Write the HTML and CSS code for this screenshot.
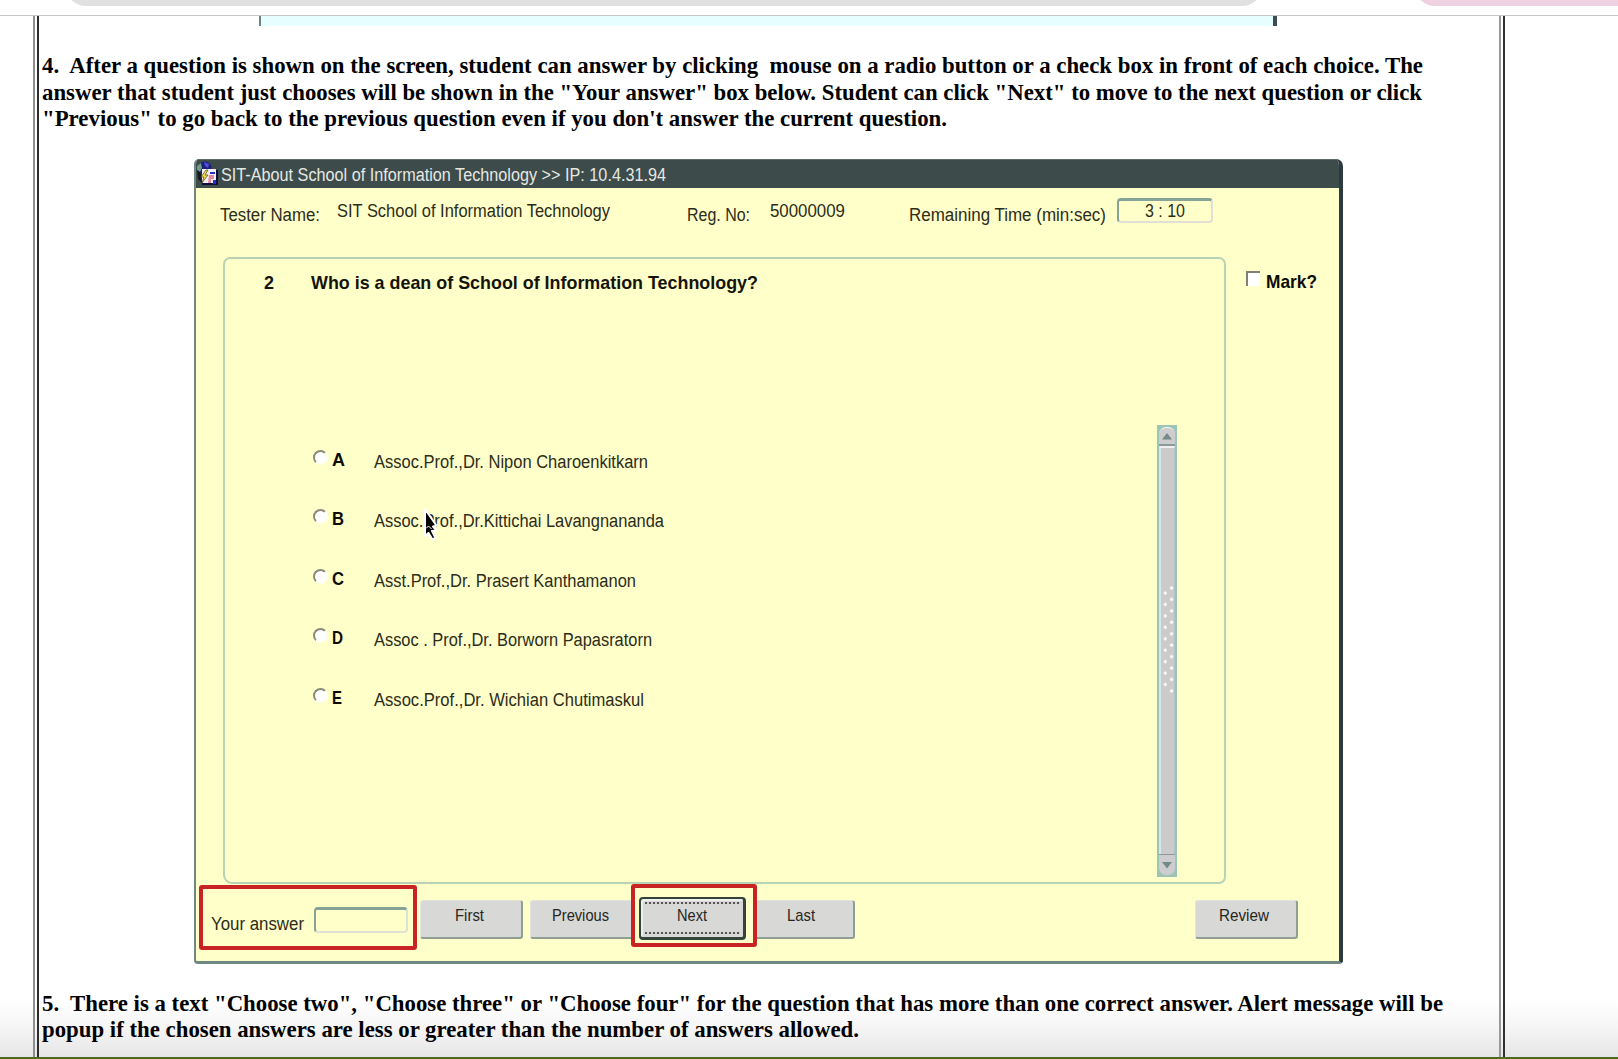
FILE: index.html
```html
<!DOCTYPE html>
<html lang="en">
<head>
<meta charset="utf-8">
<title>Testing System Guide</title>
<link rel="stylesheet" href="styles.css">
</head>
<body>
<header class="toolbar"><div class="pill pill-address"></div><div class="pill pill-action"></div></header>
<main class="frame">
<div class="sheet">
  <div class="previous-shot"></div>
  <div class="para para-four">
    <div><span class="fit" data-w="1381">4.&nbsp; After a question is shown on the screen, student can answer by clicking&nbsp; mouse on a radio button or a check box in front of each choice. The</span></div>
    <div><span class="fit" data-w="1380">answer that student just chooses will be shown in the "Your answer" box below. Student can click "Next" to move to the next question or click</span></div>
    <div><span class="fit" data-w="905">"Previous" to go back to the previous question even if you don't answer the current question.</span></div>
  </div>

  <section class="window">
    <div class="titlebar">
      <svg class="app-icon" width="22" height="25" viewBox="0 0 22 25">
        <circle cx="9" cy="7" r="6.500" fill="#1c1f78"/>
        <path d="M1 5l4-3 1 5-2 4-3-2z" fill="#6f9a8c"/>
        <path d="M8 1l5 2-1 4-3-2z" fill="#4a4fe0"/>
        <path d="M1 9l4 3 1 10-4-4z" fill="#15181c"/>
        <path d="M6 9h16v15H6z" fill="#0d0f3a"/>
        <path d="M6 8h14v14H6z" fill="#f3eef6"/>
        <path d="M14 11h5v2h-5zM17 19h3v4h-3z" fill="#2a2cc4"/>
        <path d="M13 14h5v4h-3v4h-3z" fill="#e58a9c"/>
        <path d="M10 9l-5 7h3l-2 6 6-8H9l3-5z" fill="#f4e04a" stroke="#4c4520" stroke-width=".7"/>
      </svg>
      <span class="fit" data-w="445">SIT-About School of Information Technology &gt;&gt; IP: 10.4.31.94</span>
    </div>

    <div class="info">
      <span class="low name-label"><span class="fit" data-w="100">Tester Name:</span></span>
      <span class="name-value"><span class="fit" data-w="273">SIT School of Information Technology</span></span>
      <span class="low reg-label"><span class="fit" data-w="63">Reg. No:</span></span>
      <span class="reg-value"><span class="fit" data-w="75">50000009</span></span>
      <span class="low time-label"><span class="fit" data-w="197">Remaining Time (min:sec)</span></span>
      <span class="field timer"><span class="fit" data-w="40">3 : 10</span></span>
    </div>

    <div class="body">
      <div class="panel">
        <div class="panel-main">
          <div class="question"><span class="number"><span class="fit" data-w="10">2</span></span><span class="fit" data-w="447">Who is a dean of School of Information Technology?</span></div>
          <div class="options">
            <div class="option"><i class="radio"></i><b><span class="fit" data-w="13">A</span></b><span class="fit" data-w="274">Assoc.Prof.,Dr. Nipon Charoenkitkarn</span></div>
            <div class="option"><i class="radio"></i><b><span class="fit" data-w="12">B</span></b><span class="fit" data-w="290">Assoc.Prof.,Dr.Kittichai Lavangnananda</span>
              <svg class="cursor" width="18" height="38" viewBox="0 0 18 38">
                <path d="M2 2v27l3.500-3 4 6.500 3-1.500-3.500-7 4.500-.5-3.500-4 3.500-.7z" fill="#000" stroke="#fff" stroke-width="2" stroke-linejoin="round"/>
                <path d="M3 21.500l2.500-2.500 3 3" fill="none" stroke="#fff" stroke-width="1"/>
              </svg></div>
            <div class="option"><i class="radio"></i><b><span class="fit" data-w="12">C</span></b><span class="fit" data-w="262">Asst.Prof.,Dr. Prasert Kanthamanon</span></div>
            <div class="option"><i class="radio"></i><b><span class="fit" data-w="11">D</span></b><span class="fit" data-w="278">Assoc . Prof.,Dr. Borworn Papasratorn</span></div>
            <div class="option"><i class="radio"></i><b><span class="fit" data-w="10">E</span></b><span class="fit" data-w="270">Assoc.Prof.,Dr. Wichian Chutimaskul</span></div>
          </div>
        </div>
        <div class="scrollbar">
          <div class="arrow arrow-up"><svg width="10" height="7"><path d="M5 0l5 6.500H0z"/></svg></div>
          <div class="thumb"><div class="grip grip-left"></div><div class="grip grip-right"></div></div>
          <div class="arrow arrow-down"><svg width="10" height="7"><path d="M0 0h10L5 6.500z"/></svg></div>
        </div>
      </div>
      <div class="mark"><i class="checkbox"></i><span class="fit" data-w="51">Mark?</span></div>
    </div>

    <div class="actions">
      <div class="highlight answer"><span class="fit" data-w="93">Your answer</span><div class="field answer-field"></div></div>
      <div class="button first"><span class="fit" data-w="29">First</span></div>
      <div class="button prev"><span class="fit" data-w="57">Previous</span></div>
      <div class="highlight next-wrap"><div class="next"><span class="fit" data-w="30">Next</span></div></div>
      <div class="button last"><span class="fit" data-w="28">Last</span></div>
      <div class="button review"><span class="fit" data-w="50">Review</span></div>
    </div>
  </section>

  <div class="para para-five">
    <div><span class="fit" data-w="1401">5.&nbsp; There is a text "Choose two", "Choose three" or "Choose four" for the question that has more than one correct answer. Alert message will be</span></div>
    <div><span class="fit" data-w="817">popup if the chosen answers are less or greater than the number of answers allowed.</span></div>
  </div>
</div>
</main>
<footer class="base-line"></footer>
<script src="fit.js"></script>
</body>
</html>
```
FILE: fit.js
```js
// Condense each label horizontally to the width given in data-w.
document.querySelectorAll('.fit').forEach(function (el) {
  var natural = el.getBoundingClientRect().width;
  var wanted = parseFloat(el.dataset.w);
  el.style.transform = 'scaleX(' + (wanted / natural) + ')';
  el.style.marginRight = (wanted - natural) + 'px';
});
```
FILE: styles.css
```css
* { box-sizing: border-box; }
body {
  margin: 0;
  width: 1618px;
  height: 1059px;
  overflow: hidden;
  display: flex;
  flex-direction: column;
  background: linear-gradient(#fff 0, #fff 1000px, #f6f6f6 1025px, #e6e6e6 1057px);
  font: 18px/20px "Liberation Sans", Arial, sans-serif;
  color: #2c2c18;
}
.fit { display: inline-block; white-space: nowrap; transform-origin: 0 0; flex: none; }

.toolbar {
  height: 16px;
  flex: none;
  display: flex;
  align-items: flex-start;
  border-bottom: 1px solid #c4c6c4;
  background: #fff;
  overflow: hidden;
}
.pill { height: 40px; margin-top: -34px; border-radius: 20px; flex: none; }
.pill-address { margin-left: 66px; width: 1196px; background: #e0e0e0; }
.pill-action { margin-left: 153px; width: 240px; background: #eed2e2; }

.frame {
  flex: none;
  height: 1041px;
  width: 1472px;
  margin-left: 33px;
  border-left: 2px solid #8f8f8f;
  border-right: 2px solid #303030;
  padding: 0 2px;
  overflow: hidden;
}
.sheet {
  height: 100%;
  border-left: 2px solid #2c2c2c;
  border-right: 2px solid #999;
}
.previous-shot {
  height: 10px;
  width: 1018px;
  margin-left: 220px;
  background: #e6feff;
  border-left: 2px solid #6c8284;
  border-right: 4px solid #3d4e52;
}
.para {
  padding-left: 3px;
  font: bold 23px/26.5px "Liberation Serif", "Times New Roman", serif;
  color: #000;
}
.para > div { height: 26.5px; }
.para-four { margin-top: 27px; height: 106px; }
.para-five { margin-top: 26.500px; }

.window {
  width: 1149px;
  height: 805px;
  margin-left: 155px;
  border: solid #6f8882;
  border-width: 0 4px 3px 2px;
  border-right-color: #2b3a40;
  border-radius: 5px 7px 4px 4px;
  background: #ffffca;
  overflow: hidden;
}
.titlebar {
  height: 29px;
  background: #3e4b4b;
  border-top: 1px solid #5d6b6a;
  color: #e4e8e2;
  display: flex;
  align-items: flex-start;
}
.titlebar .fit { margin-top: 5px; margin-left: 3px; }
.app-icon { margin-top: 1px; flex: none; }

.info { height: 69px; display: flex; align-items: flex-start; padding-top: 13px; }
.info > span { height: 20px; flex: none; display: block; }
.info > .low { margin-top: 4px; }
.name-label { margin-left: 24px; }
.name-value { margin-left: 17px; }
.reg-label { margin-left: 77px; }
.reg-value { margin-left: 20px; }
.time-label { margin-left: 64px; }
.field {
  border: 2px solid;
  border-color: #86a398 #e0e0d4 #e0e0d4 #86a398;
  border-top-width: 3px;
  border-radius: 4px;
}
.info > .timer { margin: -3px 0 0 11px; width: 96px; height: 25px; padding-left: 26px; }

.body { height: 627px; display: flex; align-items: flex-start; padding-left: 27px; }
.panel {
  flex: none;
  width: 1003px;
  height: 627px;
  border: 2px solid #b8d2b4;
  border-radius: 7px 7px 7px 9px;
  display: flex;
  align-items: flex-start;
}
.panel-main { width: 932px; flex: none; color: #2c2c18; }
.question { display: flex; padding: 14px 0 0 39px; font-weight: bold; font-size: 19px; color: #14140a; }
.number { width: 47px; }
.options { padding: 157px 0 0 88px; }
.option { position: relative; height: 59.400px; display: flex; align-items: flex-start; }
.radio {
  width: 15px;
  height: 15px;
  flex: none;
  border-radius: 50%;
  background: #fff;
  border: 2px solid;
  border-color: #8a8a78 #ffffee #ffffee #8a8a78;
}
.option b { width: 43px; margin-left: 4px; font-size: 19px; color: #0c0c04; flex: none; }
.option > .fit { margin-top: 2px; margin-left: -1px; }
.cursor { position: absolute; left: 110px; top: -2px; }

.scrollbar {
  margin-top: 166px;
  width: 20px;
  height: 452px;
  flex: none;
  background: #9cc4b8;
  padding: 2px;
  display: flex;
  flex-direction: column;
}
.arrow {
  height: 19px;
  background: #cdcdcd;
  display: flex;
  justify-content: center;
  align-items: center;
  fill: #75888a;
}
.arrow-up { border-radius: 7px 7px 0 0; border-top: 1px solid #f4f4f4; border-bottom: 2px solid #8a9a9a; }
.arrow-down { border-radius: 0 0 7px 7px; height: 21px; border-top: 1px solid #8a9a9a; }
.thumb {
  flex: 1;
  background: #cbcbcb;
  border-top: 2px solid #f0f0ee;
  border-left: 2px solid #d8e6e6;
  border-right: 1px solid #b4c4c6;
  padding-left: 2px;
  display: flex;
  align-items: flex-start;
}
.grip {
  width: 6.500px;
  background: radial-gradient(circle at 2.500px 3px, #fff 1px, #e4e4e4 1.500px, transparent 2.200px) 0 0 / 6.500px 11.440px repeat-y;
}
.grip-left { margin-top: 142px; height: 103px; }
.grip-right { margin-top: 137px; height: 114px; }

.mark { display: flex; margin: 13px 0 0 19.500px; font-weight: bold; font-size: 19px; color: #0c0c04; }
.checkbox { width: 14px; height: 15px; background: #fff; border: solid #808074; border-width: 2px 0 0 2px; margin: 1px 6px 0 0; }
.mark .fit { margin-top: 2px; }

.actions { height: 78px; display: flex; align-items: flex-start; padding-left: 3px; color: #26261c; }
.highlight { border: 4px solid #c82424; border-radius: 3px; flex: none; }
.answer { width: 218px; height: 65px; margin-top: 1px; padding-left: 8px; display: flex; align-items: flex-start; color: #2c2c18; }
.answer .fit { margin-top: 24.500px; }
.answer-field { width: 94px; height: 26px; margin: 18px 0 0 10px; }
.button {
  height: 39px;
  margin-top: 15.500px;
  padding-top: 5px;
  flex: none;
  background: #d8d8d7;
  border: solid #e4e4dc;
  border-width: 1px 2px 2px 1px;
  border-right-color: #8f9f94;
  border-bottom-color: #8f9f94;
  border-radius: 3px;
  font-size: 17px;
}
.first { width: 103px; margin-left: 3px; padding-left: 34px; }
.prev { width: 101px; margin-left: 7px; padding-left: 21px; border-right: 0; border-radius: 3px 0 0 3px; }
.next-wrap { width: 126px; height: 63px; padding: 9px 3px 0 4px; }
.next {
  position: relative;
  width: 107px;
  height: 43px;
  border: 2px solid #34443a;
  border-width: 2px 3px 3px 2px;
  border-radius: 4px;
  background: #d8d8d7;
  box-shadow: inset 2px 2px 0 #eeeeec;
  padding: 7px 0 0 36px;
  font-size: 17px;
}
.next::before, .next::after {
  content: "";
  position: absolute;
  left: 4px;
  right: 3px;
  height: 2px;
  background: repeating-linear-gradient(90deg, #555 0 2px, #d0d0d0 2px 4px);
}
.next::before { top: 3px; }
.next::after { bottom: 3px; }
.last { width: 98px; padding-left: 30px; border-left: 0; border-radius: 0 3px 3px 0; }
.review { width: 103px; margin-left: 340px; padding-left: 23px; }

.base-line { height: 2px; flex: none; background: #4c6a24; }
```
